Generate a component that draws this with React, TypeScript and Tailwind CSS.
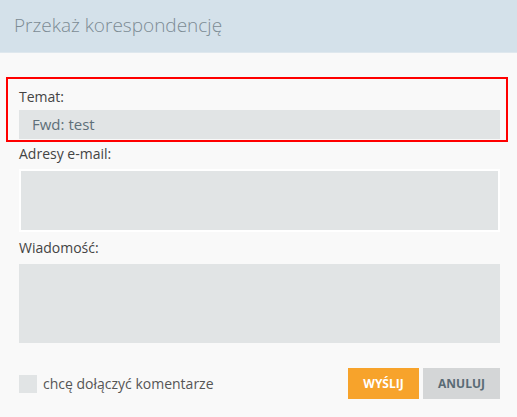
import React from 'react';

const App: React.FC = () => {
    return (
        <div className="w-[517px] h-[417px] bg-[#f9f9f9] font-['Open_Sans',sans-serif] overflow-hidden">
            {/* Nagłówek */}
            <div className="h-[53px] bg-[#d4e1ea] border-b border-[#dfe8ee] flex items-center px-[14px]">
                <h1 className="text-[19px] font-light text-[#7c8b94] leading-none pb-[1px]">Przekaż korespondencję</h1>
            </div>

            <div className="pt-[24px] pl-[6px] pr-[9px]">
                {/* Temat */}
                <div className="border-2 border-[#ff0000] pl-[11px] pr-[6px] pt-[8px] pb-[1px]">
                    <label className="block text-[14px] text-[#444] leading-[20px] mb-[3px]">Temat:</label>
                    <div className="h-[29px] bg-[#e1e4e5] flex items-center px-[13px] text-[15px] text-[#5e6f79]">
                        Fwd: test
                    </div>
                </div>

                <div className="pl-[13px] pr-[8px]">
                    <label className="block text-[14px] text-[#444] leading-[20px] mt-[2px] mb-[5px]">Adresy e-mail:</label>
                    <textarea className="block w-full h-[63px] bg-[#e1e4e5] border-2 border-white outline-none resize-none" />

                    <label className="block text-[14px] text-[#444] leading-[20px] mt-[6px] mb-[6px]">Wiadomość:</label>
                    <textarea className="block w-full h-[79px] bg-[#e1e4e5] outline-none resize-none" />

                    {/* Stopka */}
                    <div className="flex items-center justify-between mt-[25px]">
                        <label className="flex items-center gap-[6px] text-[14px] text-[#555]">
                            <span className="w-[18px] h-[18px] bg-[#e1e4e5] inline-block"></span>
                            chcę dołączyć komentarze
                        </label>
                        <div className="flex gap-[4px]">
                            <button className="w-[71px] h-[31px] bg-[#f7a32b] text-white text-[12px] font-bold uppercase">
                                Wyślij
                            </button>
                            <button className="w-[77px] h-[31px] bg-[#d4d6d7] text-[#5a6b75] text-[12px] font-bold uppercase">
                                Anuluj
                            </button>
                        </div>
                    </div>
                </div>
            </div>
        </div>
    );
};

export default App;
